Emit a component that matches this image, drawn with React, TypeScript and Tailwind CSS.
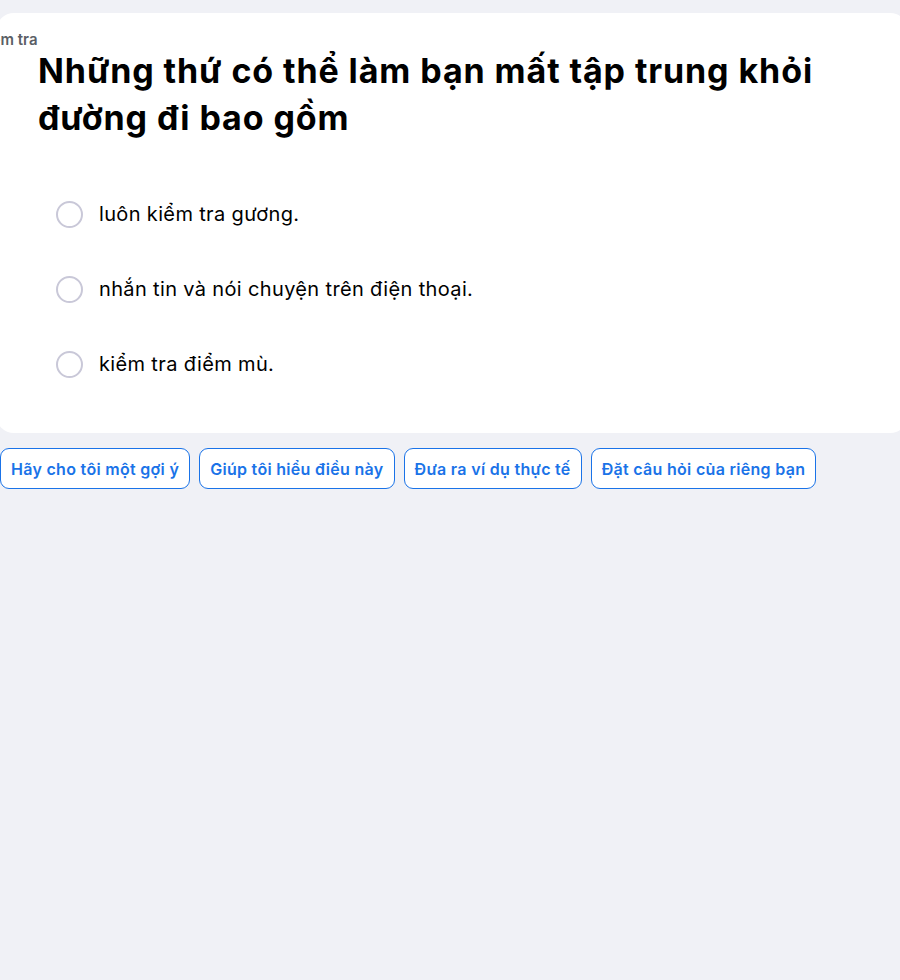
const options = [
  "luôn kiểm tra gương.",
  "nhắn tin và nói chuyện trên điện thoại.",
  "kiểm tra điểm mù.",
];

const hints = [
  "Hãy cho tôi một gợi ý",
  "Giúp tôi hiểu điều này",
  "Đưa ra ví dụ thực tế",
  "Đặt câu hỏi của riêng bạn",
];

export default function App() {
  return (
    <div
      className="min-h-[980px] w-[900px] overflow-hidden bg-[#f0f1f6] pt-[13px]"
      style={{ fontFamily: '"Inter", "Open Sans", sans-serif' }}
    >
      <section className="-ml-[4px] -mr-[8px] rounded-[18px] bg-white pb-[55px] pt-[18px]">
        <p className="-ml-[19px] text-[15px] font-semibold leading-[18px] text-[#5b5f66]">Kiểm tra</p>
        <h1 className="ml-[42px] mt-[-2px] max-w-[800px] text-[34px] font-bold leading-[47px] tracking-[0.9px] text-black">
          Những thứ có thể làm bạn mất tập trung khỏi đường đi bao gồm
        </h1>
        <ul className="ml-[60px] mt-[59px] flex flex-col gap-[47px]">
          {options.map((o) => (
            <li key={o} className="flex items-center gap-[16px]">
              <span className="h-[27px] w-[27px] shrink-0 rounded-full border-2 border-[#c9c8d8] bg-white" />
              <span className="text-[20px] leading-[28px] tracking-[0.35px] text-black">{o}</span>
            </li>
          ))}
        </ul>
      </section>
      <div className="mt-[15px] flex gap-[9px]">
        {hints.map((h) => (
          <button
            key={h}
            className="h-[41px] rounded-[9px] border border-[#1a73e8] bg-white px-[10px] text-[16px] font-semibold tracking-[0.3px] text-[#1a73e8]"
          >
            {h}
          </button>
        ))}
      </div>
    </div>
  );
}
